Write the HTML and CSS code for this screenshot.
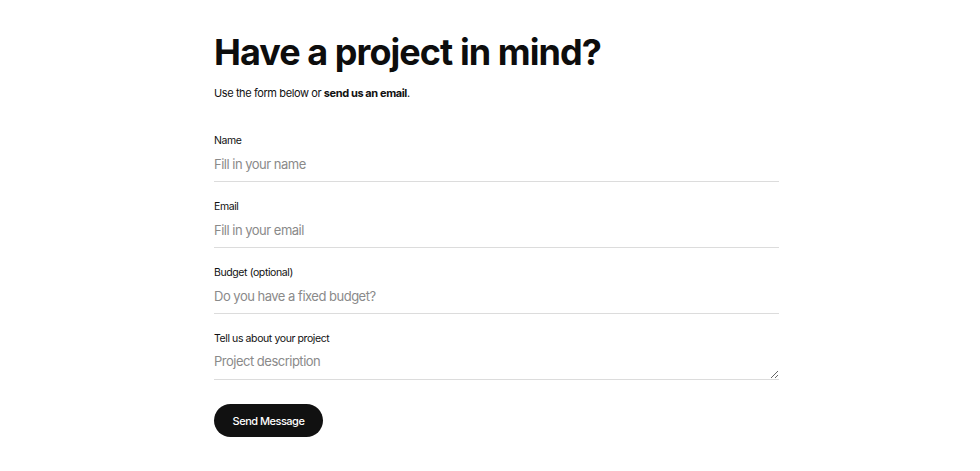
FILE: index.html
```html
<!DOCTYPE html>
<html lang="en">
<head>
<meta charset="utf-8">
<title>Contact</title>
<link rel="stylesheet" href="styles.css">
</head>
<body>
<main class="wrap">
  <h1 class="title">Have a project in mind?</h1>
  <p class="lead">Use the form below or <strong>send us an email</strong>.</p>
  <form class="form">
    <label class="field">
      <span class="label">Name</span>
      <input class="input" type="text" placeholder="Fill in your name">
    </label>
    <label class="field">
      <span class="label">Email</span>
      <input class="input" type="email" placeholder="Fill in your email">
    </label>
    <label class="field">
      <span class="label">Budget (optional)</span>
      <input class="input" type="text" placeholder="Do you have a fixed budget?">
    </label>
    <label class="field">
      <span class="label">Tell us about your project</span>
      <textarea class="input textarea" rows="1" placeholder="Project description"></textarea>
    </label>
    <button class="btn" type="button">Send Message</button>
  </form>
</main>
</body>
</html>
```
FILE: styles.css
```css
* { box-sizing: border-box; }
body {
  margin: 0;
  background: #fff;
  color: #111;
  font-family: Inter, "Noto Sans", sans-serif;
}
.wrap {
  width: 565px;
  margin: 0 0 0 214px;
  padding-top: 30px;
}
.title {
  margin: 0;
  font-size: 36px;
  font-weight: 700;
  letter-spacing: -0.95px;
  line-height: 44px;
  color: #0d0d0d;
}
.lead {
  margin: 10px 0 0;
  font-size: 11px;
  line-height: 18px;
  letter-spacing: -0.4px;
}
.lead strong { font-weight: 700; }
.form {
  display: flex;
  flex-direction: column;
  margin-top: 30px;
}
.field {
  display: flex;
  flex-direction: column;
  margin-bottom: 16px;
}
.label {
  padding-top: 1px;
  font-size: 10.5px;
  line-height: 16px;
  letter-spacing: -0.4px;
  color: #111;
}
.input {
  display: block;
  width: 100%;
  height: 33px;
  margin: 0;
  border: 0;
  border-bottom: 1px solid #dcdcdc;
  padding: 6px 0 9px;
  font-family: inherit;
  font-size: 13px;
  line-height: 17px;
  letter-spacing: -0.5px;
  color: #111;
  background: transparent;
  outline: none;
}
.input::placeholder { color: #8a8a8a; }
.textarea { resize: vertical; overflow: hidden; }
.btn {
  align-self: flex-start;
  margin-top: 8px;
  width: 109px;
  height: 33px;
  border: 0;
  border-radius: 17px;
  background: #111;
  color: #fff;
  font-family: inherit;
  font-size: 11px;
  font-weight: 500;
  letter-spacing: -0.5px;
  padding: 0;
}
```
